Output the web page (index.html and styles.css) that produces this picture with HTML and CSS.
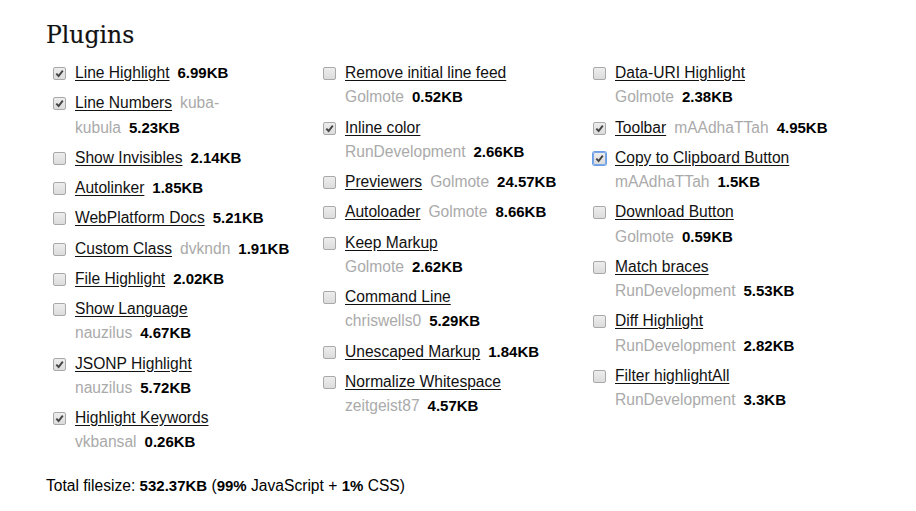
FILE: index.html
```html
<!DOCTYPE html>
<html>
<head>
<meta charset="utf-8">
<link rel="stylesheet" href="styles.css">
</head>
<body>
<div class="page">
  <h1 class="title">Plugins</h1>
  <div class="cols">
    <div class="col">
      <div class="item"><span class="cb on"></span><div class="txt"><a>Line Highlight</a><b>6.99KB</b></div></div>
      <div class="item"><span class="cb on"></span><div class="txt"><a>Line Numbers</a><span class="owner">kuba-</span><br><span class="owner first">kubula</span><b>5.23KB</b></div></div>
      <div class="item"><span class="cb"></span><div class="txt"><a>Show Invisibles</a><b>2.14KB</b></div></div>
      <div class="item"><span class="cb"></span><div class="txt"><a>Autolinker</a><b>1.85KB</b></div></div>
      <div class="item"><span class="cb"></span><div class="txt"><a>WebPlatform Docs</a><b>5.21KB</b></div></div>
      <div class="item"><span class="cb"></span><div class="txt"><a>Custom Class</a><span class="owner">dvkndn</span><b>1.91KB</b></div></div>
      <div class="item"><span class="cb"></span><div class="txt"><a>File Highlight</a><b>2.02KB</b></div></div>
      <div class="item"><span class="cb"></span><div class="txt"><a>Show Language</a><br><span class="owner first">nauzilus</span><b>4.67KB</b></div></div>
      <div class="item"><span class="cb on"></span><div class="txt"><a>JSONP Highlight</a><br><span class="owner first">nauzilus</span><b>5.72KB</b></div></div>
      <div class="item"><span class="cb on"></span><div class="txt"><a>Highlight Keywords</a><br><span class="owner first">vkbansal</span><b>0.26KB</b></div></div>
    </div>
    <div class="col">
      <div class="item"><span class="cb"></span><div class="txt"><a>Remove initial line feed</a><br><span class="owner first">Golmote</span><b>0.52KB</b></div></div>
      <div class="item"><span class="cb on"></span><div class="txt"><a>Inline color</a><br><span class="owner first">RunDevelopment</span><b>2.66KB</b></div></div>
      <div class="item"><span class="cb"></span><div class="txt"><a>Previewers</a><span class="owner">Golmote</span><b>24.57KB</b></div></div>
      <div class="item"><span class="cb"></span><div class="txt"><a>Autoloader</a><span class="owner">Golmote</span><b>8.66KB</b></div></div>
      <div class="item"><span class="cb"></span><div class="txt"><a>Keep Markup</a><br><span class="owner first">Golmote</span><b>2.62KB</b></div></div>
      <div class="item"><span class="cb"></span><div class="txt"><a>Command Line</a><br><span class="owner first">chriswells0</span><b>5.29KB</b></div></div>
      <div class="item"><span class="cb"></span><div class="txt"><a>Unescaped Markup</a><b>1.84KB</b></div></div>
      <div class="item"><span class="cb"></span><div class="txt"><a>Normalize Whitespace</a><br><span class="owner first">zeitgeist87</span><b>4.57KB</b></div></div>
    </div>
    <div class="col">
      <div class="item"><span class="cb"></span><div class="txt"><a>Data-URI Highlight</a><br><span class="owner first">Golmote</span><b>2.38KB</b></div></div>
      <div class="item"><span class="cb on"></span><div class="txt"><a>Toolbar</a><span class="owner">mAAdhaTTah</span><b>4.95KB</b></div></div>
      <div class="item"><span class="cb on focus"></span><div class="txt"><a>Copy to Clipboard Button</a><br><span class="owner first">mAAdhaTTah</span><b>1.5KB</b></div></div>
      <div class="item"><span class="cb"></span><div class="txt"><a>Download Button</a><br><span class="owner first">Golmote</span><b>0.59KB</b></div></div>
      <div class="item"><span class="cb"></span><div class="txt"><a>Match braces</a><br><span class="owner first">RunDevelopment</span><b>5.53KB</b></div></div>
      <div class="item"><span class="cb"></span><div class="txt"><a>Diff Highlight</a><br><span class="owner first">RunDevelopment</span><b>2.82KB</b></div></div>
      <div class="item"><span class="cb"></span><div class="txt"><a>Filter highlightAll</a><br><span class="owner first">RunDevelopment</span><b>3.3KB</b></div></div>
    </div>
  </div>
  <p class="total">Total filesize: <b>532.37KB</b> (<b>99%</b> JavaScript + <b>1%</b> CSS)</p>
</div>
</body>
</html>
```
FILE: styles.css
```css
html, body {
  margin: 0;
  background: #fff;
}
.page {
  padding: 17px 46px 0 46px;
  font-family: "Liberation Sans", Arial, sans-serif;
  font-size: 15.6px;
  color: #000;
}
.title {
  margin: 0;
  font-family: "DejaVu Serif", serif;
  font-weight: normal;
  font-size: 23.5px;
  line-height: 36px;
  color: #111;
  -webkit-text-stroke: 0.2px #111;
}
.cols {
  display: grid;
  grid-template-columns: 270px 270px 270px;
  margin: 8px 0 0 7px;
}
.col {
  display: flex;
  flex-direction: column;
  gap: 6px;
}
.item {
  display: flex;
  align-items: flex-start;
  gap: 9px;
  line-height: 24.25px;
}
.cb {
  flex: none;
  width: 11px;
  height: 11px;
  margin-top: 6px;
  border: 1px solid #a9a9a9;
  border-radius: 2px;
  background: linear-gradient(#ededed, #dcdcdc);
  position: relative;
}
.cb.on::after {
  content: "";
  position: absolute;
  left: 1px;
  top: 1px;
  width: 9px;
  height: 9px;
  background: no-repeat center/9px 9px url("data:image/svg+xml;utf8,<svg xmlns='http://www.w3.org/2000/svg' viewBox='0 0 9 9'><path d='M1.3 4.6 L3.6 7 L7.8 1.6' fill='none' stroke='%23444' stroke-width='1.9'/></svg>");
}
.cb.focus {
  box-shadow: 0 0 0 1px #6d9ee8;
  border-color: #7aa6e6;
}
.txt a {
  color: #111;
  text-decoration: underline;
  text-underline-offset: 2px;
}
.owner {
  color: #aaa;
  margin-left: 8px;
}
.owner.first {
  margin-left: 0;
}
.txt b {
  font-weight: bold;
  font-size: 15px;
  margin-left: 8px;
}
.total {
  margin: 19px 0 0 0;
  line-height: 24px;
}
.total b {
  font-weight: bold;
  font-size: 15px;
}
```
